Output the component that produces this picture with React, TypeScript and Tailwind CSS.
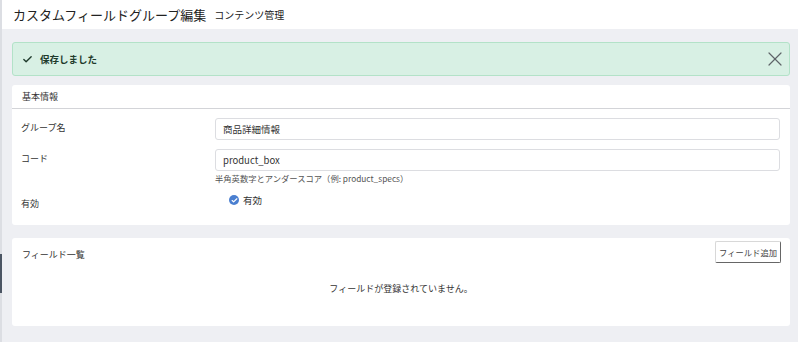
import { Check, X } from 'lucide-react';

const font = { fontFamily: '"Noto Sans CJK JP", "Noto Sans", sans-serif' };

function FormRow({ label, children, labelClass = '' }: { label: string; children: React.ReactNode; labelClass?: string }) {
  return (
    <div className="flex">
      <div className={`w-[203px] shrink-0 pl-[9px] text-[9px] text-[#333] ${labelClass}`}>{label}</div>
      <div className="flex-1 pr-[10px]">{children}</div>
    </div>
  );
}

export default function App() {
  return (
    <div className="flex h-[342px] w-[798px] overflow-hidden bg-white text-[#222]" style={font}>
      <div className="w-[2px] shrink-0 bg-[#dcdee3]">
        <div className="mt-[254px] h-[39px] bg-[#4b5563]" />
      </div>

      <div className="flex flex-1 flex-col">
        <header className="flex h-[29px] shrink-0 items-center gap-[8px] bg-white pl-[11px]">
          <h1 className="text-[13px] leading-none text-[#222]">カスタムフィールドグループ編集</h1>
          <span className="text-[10px] leading-none text-[#222]">コンテンツ管理</span>
        </header>

        <main className="flex flex-1 flex-col bg-[#eeeff3] pl-[10px] pr-[8px] pt-[13px]">
          <div className="flex h-[34px] items-center rounded-[3px] border border-[#b3e2c8] bg-[#d8f0e4] pl-[9px] pr-[2px]">
            <Check className="h-[11px] w-[11px] text-[#1f3b2c]" strokeWidth={3} />
            <span className="ml-[7px] text-[9.5px] font-bold text-[#1f3b2c]">保存しました</span>
            <X className="ml-auto h-[24px] w-[24px] text-[#5f6468]" strokeWidth={1.2} />
          </div>

          <section className="mt-[9px] h-[140px] rounded-[3px] bg-white">
            <div className="flex h-[24px] items-center border-b border-[#d3d4d8] pl-[10px] text-[9px] text-[#333]">
              基本情報
            </div>
            <div className="flex flex-col pt-[9px]">
              <FormRow label="グループ名" labelClass="pt-[3px]">
                <div className="flex h-[22px] items-center rounded-[3px] border border-[#dcdde1] px-[7px] text-[9.5px] text-[#333]">
                  商品詳細情報
                </div>
              </FormRow>
              <div className="mt-[9px]">
                <FormRow label="コード" labelClass="pt-[3px]">
                  <div className="flex h-[22px] items-center rounded-[3px] border border-[#dcdde1] px-[7px] text-[9.5px] text-[#333]">
                    product_box
                  </div>
                  <div className="mt-[2px] text-[8.3px] leading-[11px] text-[#555]">
                    半角英数字とアンダースコア（例: product_specs）
                  </div>
                </FormRow>
              </div>
              <div className="mt-[9px]">
                <FormRow label="有効" labelClass="pt-[4px]">
                  <div className="flex items-center pl-[14px]">
                    <span className="flex h-[10px] w-[10px] items-center justify-center rounded-full bg-[#4a7fd0]">
                      <Check className="h-[7px] w-[7px] text-white" strokeWidth={4} />
                    </span>
                    <span className="ml-[4px] text-[9.5px] text-[#333]">有効</span>
                  </div>
                </FormRow>
              </div>
            </div>
          </section>

          <section className="mt-[13px] flex h-[88px] flex-col rounded-[3px] bg-white">
            <div className="flex items-start pl-[10px] pr-[9px] pt-[3px]">
              <span className="mt-[7px] text-[9px] text-[#333]">フィールド一覧</span>
              <button
                type="button"
                className="ml-auto flex h-[22px] items-center rounded-[2px] border border-[#d8d8d8] border-b-[#666] border-r-[#666] bg-white px-[3px] text-[8.3px] text-[#444]"
              >
                フィールド追加
              </button>
            </div>
            <div className="mt-[19px] text-center text-[9px] text-[#333]">フィールドが登録されていません。</div>
          </section>
        </main>
      </div>
    </div>
  );
}
